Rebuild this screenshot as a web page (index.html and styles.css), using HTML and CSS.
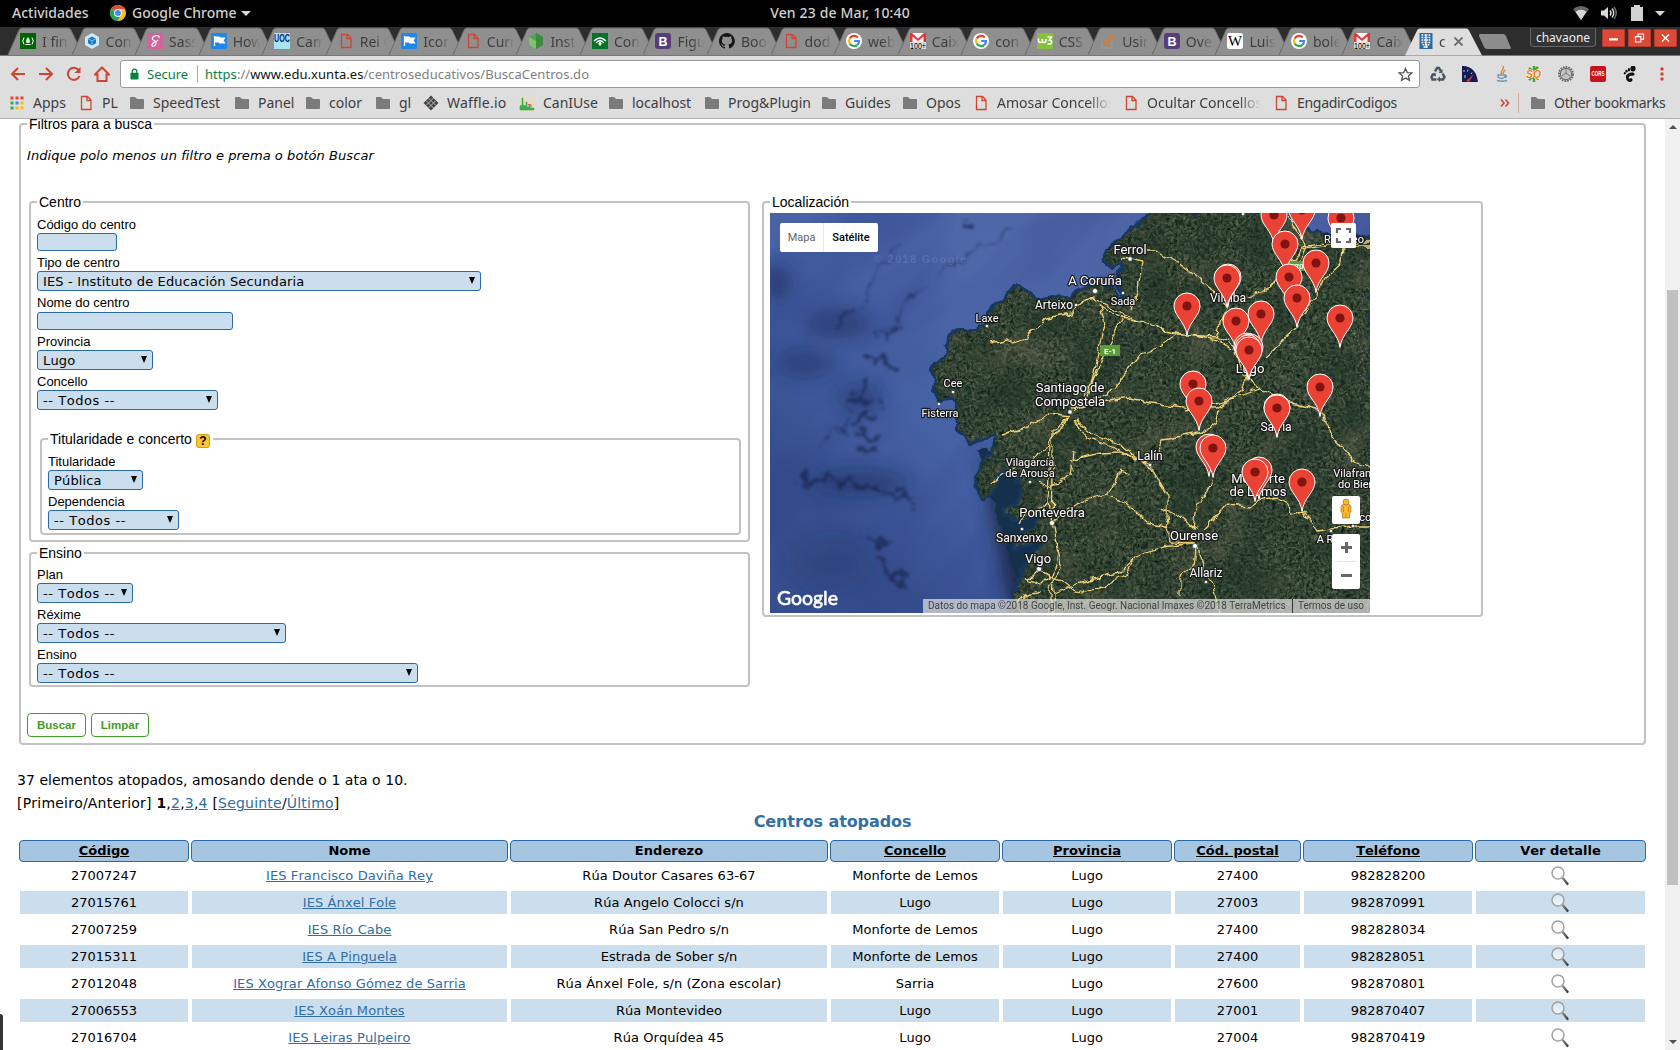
FILE: index.html
```html
<!DOCTYPE html>
<html lang="gl">
<head>
<meta charset="utf-8">
<title>Centros educativos</title>
<link rel="stylesheet" href="styles.css">
</head>
<body>
<svg class="defs" width="0" height="0" aria-hidden="true">
  <symbol id="tab" viewBox="0 0 78 28"><path d="M1 28L12 3Q13 1 15 1H61Q63 1 64 3L76 28Z" fill="#8f8f8f"/><path d="M1 28L12 3Q13 1 15 1H61Q63 1 64 3L76 28" fill="none" stroke="#6c6c6c"/></symbol>
  <symbol id="tab-on" viewBox="0 0 78 28"><path d="M0 28L12 3Q13 1 15 1H61Q63 1 64 3L77 28Z" fill="#dedede"/></symbol>
  <symbol id="file" viewBox="0 0 16 16"><path d="M3.500 1.500h6l3.500 3.500v9.500h-9.500zM9 1.500v4h4" fill="none" stroke="#cc4633" stroke-width="1.300"/></symbol>
  <symbol id="folder" viewBox="0 0 16 16"><path d="M1 3q0-1 1-1h4l2 2h6q1 0 1 1v8q0 1-1 1H2q-1 0-1-1z" fill="#7b7b7b"/></symbol>
  <symbol id="google" viewBox="0 0 16 16"><circle cx="8" cy="8" r="8" fill="#fff"/><g fill="none" stroke-width="2.200"><path d="M11.800 4.400A5 5 0 0 0 3.700 5.600" stroke="#ea4335"/><path d="M3.700 5.600a5 5 0 0 0 0 4.800" stroke="#fbbc05"/><path d="M3.700 10.400a5 5 0 0 0 7.700 1.400" stroke="#34a853"/><path d="M11.400 11.800A5 5 0 0 0 13 8H8.200" stroke="#4285f4"/></g></symbol>
  <symbol id="flag" viewBox="0 0 16 16"><rect width="16" height="16" rx="1.500" fill="#2087ea"/><path d="M3.500 3v10M4 4h4l1 1h4.500l-1.500 2.500L13.500 10H9L8 9H4z" fill="#fff" stroke="#fff" stroke-width="1.200"/></symbol>
  <symbol id="fcc" viewBox="0 0 16 16"><rect width="16" height="16" fill="#006400"/><path d="M4 4.500q-2.500 3.500 0 7M12 4.500q2.500 3.500 0 7" fill="none" stroke="#fff"/><path d="M8 4q3 3.500 1.500 6h-3Q5 7.500 8 4z" fill="#d8ead8"/><path d="M5.500 11.500h5" stroke="#fff"/></symbol>
  <symbol id="webpack" viewBox="0 0 16 16"><path d="M8 0l7 4v8l-7 4-7-4V4z" fill="#cfe9f7"/><path d="M8 3.500l4 2.200v4.600l-4 2.200-4-2.200V5.700z" fill="#1c78c0"/><path d="M4 5.700l4 2.200 4-2.200M8 8v4.500" stroke="#8ed6fb" fill="none" stroke-width=".8"/></symbol>
  <symbol id="sass" viewBox="0 0 16 16"><rect width="16" height="16" fill="#cf649a"/><path d="M12 5c1-3-4-3-6-1s0 3 2 4 1 4-1 5-3-1-1-3 4-1 5-3" fill="none" stroke="#fff" stroke-width="1.200"/></symbol>
  <symbol id="node" viewBox="0 0 16 16"><path d="M8 0l7 4v8l-7 4-7-4V4z" fill="#55a04c"/><path d="M8 0l7 4v8l-7 4z" fill="#3d8b3d"/><path d="M1 4l7 4v8l-7-4z" fill="#7dc46c"/></symbol>
  <symbol id="signal" viewBox="0 0 16 16"><rect width="16" height="16" fill="#067427"/><path d="M2 8q6-6 12 0M4 10q4-4.500 8 0" fill="none" stroke="#fff" stroke-width="1.300"/><circle cx="8" cy="10.500" r="1.500" fill="#fff"/><path d="M8 10v3" stroke="#fff"/></symbol>
  <symbol id="github" viewBox="0 0 16 16"><path fill="#161616" d="M8 0C3.600 0 0 3.600 0 8c0 3.500 2.300 6.500 5.500 7.600.4.100.5-.2.500-.4v-1.400c-2.200.5-2.700-1-2.700-1-.4-.9-.9-1.200-.9-1.200-.7-.5.100-.5.100-.5.800.1 1.200.8 1.200.8.700 1.200 1.900.9 2.300.7.100-.5.300-.9.500-1.100-1.800-.2-3.600-.9-3.600-4 0-.9.300-1.600.8-2.100-.1-.2-.4-1 .1-2.100 0 0 .7-.2 2.200.8a7.600 7.600 0 0 1 4 0c1.500-1 2.200-.8 2.200-.8.400 1.100.2 1.900.1 2.100.5.600.8 1.300.8 2.100 0 3.100-1.900 3.700-3.700 3.900.300.300.600.800.600 1.500v2.200c0 .200.100.500.600.400A8 8 0 0 0 8 0z"/></symbol>
  <symbol id="w3" viewBox="0 0 16 16"><rect width="16" height="16" fill="#83c13f"/><path d="M1.500 5.500v2q0 2 2 2t1.800-2V6v1.500q0 2 1.800 2t1.900-2V6M10.500 4h4l-2.200 3q2.700.3 2.200 2.800-1.500 2.200-4 .7" fill="none" stroke="#fff" stroke-width="1.600"/></symbol>
  <symbol id="so" viewBox="0 0 16 16"><path d="M2 9v6h10V9" fill="none" stroke="#999" stroke-width="1.300"/><path d="M4 12.500h6M4.200 9.700l6 1.200M5.200 6.500l5.500 2.700M7.500 3.300l4.500 4M10.500 1l3 5" stroke="#e8771c" stroke-width="1.400"/></symbol>
  <symbol id="xunta" viewBox="0 0 16 16"><path d="M1.500 0h13v16h-13z" fill="#2c6a9f"/><path d="M8 1v14" stroke="#fff" stroke-width="1.200"/><path d="M3.500 2h2m1 0h3m1 0h2M3.500 4.500h2m1 0h3m1 0h2M3.500 7h9M3.500 9.500h2m1 0h3m1 0h2M4.500 11.700h7M5.500 14h5" stroke="#fff" stroke-width="1.500" stroke-dasharray="1.800 .7"/></symbol>
  <linearGradient id="lens" x2="0" y2="1"><stop offset="0" stop-color="#fff" stop-opacity=".2"/><stop offset="1" stop-color="#fff" stop-opacity=".75"/></linearGradient>
  <linearGradient id="handle" x2="1"><stop offset="0" stop-color="#999"/><stop offset="1" stop-color="#333"/></linearGradient>
  <symbol id="mag" viewBox="0 0 20 20"><circle cx="8" cy="7" r="6" fill="url(#lens)" stroke="#a2a2a2" stroke-width="1.500"/><path d="M11.500 12.500l2-1.300 5 6q.5 2-1.500 2z" fill="url(#handle)"/></symbol>
</svg>

<header class="topbar">
  <span class="act">Actividades</span>
  <svg class="chrome" viewBox="0 0 16 16"><circle cx="8" cy="8" r="8" fill="#fbc116"/><path d="M8 8L1.100 4A8 8 0 0 1 14.900 4H8z" fill="#dd4b3e"/><path d="M1.100 4a8 8 0 0 0 6.400 12l3.600-6L8 8z" fill="#1da462"/><circle cx="8" cy="8" r="4" fill="#fff"/><circle cx="8" cy="8" r="3" fill="#4c8bf5"/></svg>
  <span class="app">Google Chrome</span><i class="caret"></i>
  <span class="clock">Ven 23 de Mar, 10:40</span>
  <div class="status">
    <svg width="16" height="14" viewBox="0 0 16 14"><path d="M0 3q8-6 16 0L8 14z" fill="#666"/><path d="M2.500 5.800q5.500-4 11 0L8 14z" fill="#d8d8d8"/></svg>
    <svg width="17" height="14" viewBox="0 0 17 14"><path d="M0 4.500h3L7 1v12L3 9.500H0z" fill="#d8d8d8"/><path d="M9 4.500q2 2.500 0 5M11 2.500q3.500 4.500 0 9" stroke="#d8d8d8" stroke-width="1.500" fill="none"/><path d="M13 1q4.500 6 0 12" stroke="#777" stroke-width="1.300" fill="none"/></svg>
    <svg width="12" height="16" viewBox="0 0 12 16"><path d="M0 2h3V0h6v2h3v14H0z" fill="#d2d2d2"/></svg>
    <i class="caret"></i>
  </div>
</header>

<nav class="tabs">
  <div class="tab"><svg class="shape"><use href="#tab"/></svg><svg class="ico"><use href="#fcc"/></svg><span>I fin</span></div>
  <div class="tab"><svg class="shape"><use href="#tab"/></svg><svg class="ico"><use href="#webpack"/></svg><span>Con</span></div>
  <div class="tab"><svg class="shape"><use href="#tab"/></svg><svg class="ico"><use href="#sass"/></svg><span>Sass</span></div>
  <div class="tab"><svg class="shape"><use href="#tab"/></svg><svg class="ico"><use href="#flag"/></svg><span>How</span></div>
  <div class="tab"><svg class="shape"><use href="#tab"/></svg><svg class="ico" viewBox="0 0 16 16"><rect width="16" height="16" fill="#a5e5f2"/><text x="0" y="9" class="glyph" font-size="10" font-weight="bold" fill="#0a1a78" textLength="16" lengthAdjust="spacingAndGlyphs">UOC</text></svg><span>Cam</span></div>
  <div class="tab"><svg class="shape"><use href="#tab"/></svg><svg class="ico"><use href="#file"/></svg><span>Rei C</span></div>
  <div class="tab"><svg class="shape"><use href="#tab"/></svg><svg class="ico"><use href="#flag"/></svg><span>Icor</span></div>
  <div class="tab"><svg class="shape"><use href="#tab"/></svg><svg class="ico"><use href="#file"/></svg><span>Curr</span></div>
  <div class="tab"><svg class="shape"><use href="#tab"/></svg><svg class="ico"><use href="#node"/></svg><span>Inst</span></div>
  <div class="tab"><svg class="shape"><use href="#tab"/></svg><svg class="ico"><use href="#signal"/></svg><span>Con</span></div>
  <div class="tab"><svg class="shape"><use href="#tab"/></svg><svg class="ico" viewBox="0 0 16 16"><rect width="16" height="16" rx="3" fill="#563d7c"/><text x="8" y="12.500" text-anchor="middle" class="glyph" font-size="12.500" font-weight="bold" fill="#fff">B</text></svg><span>Figu</span></div>
  <div class="tab"><svg class="shape"><use href="#tab"/></svg><svg class="ico"><use href="#github"/></svg><span>Boo</span></div>
  <div class="tab"><svg class="shape"><use href="#tab"/></svg><svg class="ico"><use href="#file"/></svg><span>dod</span></div>
  <div class="tab"><svg class="shape"><use href="#tab"/></svg><svg class="ico"><use href="#google"/></svg><span>web</span></div>
  <div class="tab"><svg class="shape"><use href="#tab"/></svg><svg class="ico" viewBox="0 0 16 16"><path d="M0 0h16v10H0z" fill="#f4f4f4"/><path d="M0 0h2l6 5.500L14 0h2v10h-2.500V3.500L8 8 2.500 3.500V10H0z" fill="#dd3b38"/><path d="M0 9h16v7H0z" fill="#ddd"/><text x="0" y="15.500" class="glyph" font-size="8.500" textLength="16" lengthAdjust="spacingAndGlyphs">100+</text></svg><span>Caix</span></div>
  <div class="tab"><svg class="shape"><use href="#tab"/></svg><svg class="ico"><use href="#google"/></svg><span>con</span></div>
  <div class="tab"><svg class="shape"><use href="#tab"/></svg><svg class="ico"><use href="#w3"/></svg><span>CSS</span></div>
  <div class="tab"><svg class="shape"><use href="#tab"/></svg><svg class="ico"><use href="#so"/></svg><span>Usir</span></div>
  <div class="tab"><svg class="shape"><use href="#tab"/></svg><svg class="ico" viewBox="0 0 16 16"><rect width="16" height="16" rx="3" fill="#563d7c"/><text x="8" y="12.500" text-anchor="middle" class="glyph" font-size="12.500" font-weight="bold" fill="#fff">B</text></svg><span>Ove</span></div>
  <div class="tab"><svg class="shape"><use href="#tab"/></svg><svg class="ico" viewBox="0 0 16 16"><rect width="16" height="16" rx="2.500" fill="#fff"/><text x="1" y="13" font-family="Liberation Serif,serif" font-size="14" textLength="14" lengthAdjust="spacingAndGlyphs">W</text></svg><span>Luis</span></div>
  <div class="tab"><svg class="shape"><use href="#tab"/></svg><svg class="ico"><use href="#google"/></svg><span>bole</span></div>
  <div class="tab"><svg class="shape"><use href="#tab"/></svg><svg class="ico" viewBox="0 0 16 16"><path d="M0 0h16v10H0z" fill="#f4f4f4"/><path d="M0 0h2l6 5.500L14 0h2v10h-2.500V3.500L8 8 2.500 3.500V10H0z" fill="#dd3b38"/><path d="M0 9h16v7H0z" fill="#ddd"/><text x="0" y="15.500" class="glyph" font-size="8.500" textLength="16" lengthAdjust="spacingAndGlyphs">100+</text></svg><span>Caix</span></div>
  <div class="tab active"><svg class="shape"><use href="#tab-on"/></svg><svg class="ico"><use href="#xunta"/></svg><span>c</span><svg class="close" viewBox="0 0 9 9"><path d="M.5.5l8 8m0-8l-8 8" stroke="#6b6b6b" stroke-width="1.900"/></svg></div>
  <svg class="newtab" viewBox="0 0 34 16"><path d="M2 0h23q2 0 3 2l5 12q0 1-2 1H9q-2 0-3-2L1 2q0-2 1-2z" fill="#8c8c8c"/></svg>
  <span class="user">chavaone</span>
  <div class="winbtns">
    <svg viewBox="0 0 22 18"><path d="M6 10.500h10" stroke="#fff" stroke-width="2.500"/></svg>
    <svg viewBox="0 0 22 18"><path d="M6.500 7.500h6v6h-6zM9.500 7V4.500h6v6H13" fill="none" stroke="#fff" stroke-width="1.300"/></svg>
    <svg viewBox="0 0 22 18"><path d="M7 5l8 8m0-8l-8 8" stroke="#fff" stroke-width="1.600"/></svg>
  </div>
</nav>

<div class="toolbar">
  <div class="nav">
    <svg viewBox="0 0 16 16"><path d="M15 8H2.500M8 2L2 8l6 6" /></svg>
    <svg viewBox="0 0 16 16"><path d="M1 8h12.500M8 2l6 6-6 6"/></svg>
    <svg viewBox="0 0 16 16"><path d="M13.500 10A6 6 0 1 1 12.500 4"/><path d="M14.500 1v6h-6z" fill="#cc4633" stroke="none"/></svg>
    <svg viewBox="0 0 16 16"><path d="M1 8.500l7-7 7 7h-2.500V15h-9V8.500z"/></svg>
  </div>
  <div class="omni">
    <svg class="lock" viewBox="0 0 10 13"><path d="M1 5h8q.5 0 .5.500V12q0 .5-.5.500H1q-.5 0-.5-.5V5.500Q.5 5 1 5z" fill="#0b8043"/><path d="M2.500 6V3.500a2.500 2.500 0 0 1 5 0V6" fill="none" stroke="#0b8043" stroke-width="1.400"/></svg>
    <span class="secure">Secure</span>
    <span class="url"><b>https</b>://<em>www.edu.xunta.es</em>/centroseducativos/BuscaCentros.do</span>
    <svg class="star" viewBox="0 0 16 16"><path d="M8 1.500l1.900 4.400 4.800.4-3.600 3.200 1.100 4.700L8 11.700l-4.200 2.500 1.100-4.700L1.300 6.300l4.800-.4z" fill="none" stroke="#555" stroke-width="1.400"/></svg>
  </div>
  <div class="exts">
    <svg viewBox="0 0 16 16"><g fill="none" stroke="#4b5563" stroke-width="2.500"><path d="M5 5.500L7 2h2l2 3.500M12.500 7.500l2 3.500-1.500 2.500h-4M6.500 13.500h-4L1.500 11l2-3.500"/></g><path d="M12.500 3v4h-4zM10 10.500v5.500L6.800 13.300zM1 8.500l4.500-2 .5 4z" fill="#4b5563"/></svg>
    <svg viewBox="0 0 16 16"><path d="M0 0h2q12 1 14 16H0z" fill="#141c55"/><path d="M2 4v2M6 3.500l-.5 2M10 6.500L9 8M3 9v3" stroke="#b9c4ff"/><path d="M4 15l8-7-5 8z" fill="#d33"/></svg>
    <svg viewBox="0 0 16 16"><path d="M8 8C5 5 11 4 9 0M9.500 8q-1-2 2-4" fill="none" stroke="#e88426" stroke-width="1.400"/><path d="M4 9h7v2q-3.500 3-7 0zM11 9.500q3 0 0 2.500M3 14.500q5 1.500 10 0" fill="none" stroke="#7795ad" stroke-width="1.400"/></svg>
    <svg viewBox="0 0 16 16"><path d="M3 2l3 3M12 1L9 4M3 14l3-3M13 14l-3-3M8 0v16" stroke="#4ba82e" stroke-width="2.500"/><text x="0" y="12" class="glyph" font-size="11" font-weight="bold" font-style="italic" fill="#f47b10" stroke="#fff" stroke-width="1.200" paint-order="stroke" textLength="15" lengthAdjust="spacingAndGlyphs">SQ</text></svg>
    <svg viewBox="0 0 16 16"><circle cx="8" cy="8" r="7" fill="none" stroke="#666" stroke-width="2" stroke-dasharray="1.700 1"/><circle cx="8" cy="8" r="5.700" fill="#c4c4c4" stroke="#666"/><path d="M8 3v4L4 10M8 7l4 3" stroke="#777" fill="none"/></svg>
    <svg viewBox="0 0 16 16"><rect width="16" height="16" rx="2" fill="#c8141a"/><text x="1.500" y="10" class="glyph" font-size="7" font-weight="bold" fill="#fff" textLength="13" lengthAdjust="spacingAndGlyphs">CORS</text></svg>
    <svg viewBox="0 0 16 16"><g fill="#111"><ellipse cx="11" cy="2.600" rx="2.600" ry="2.900"/><ellipse cx="7" cy="3.700" rx="1.200" ry="1.700"/><ellipse cx="4.500" cy="5.200" rx="1.100" ry="1.400"/><ellipse cx="2.800" cy="7.300" rx="1" ry="1.200"/><path d="M12.500 8.500c.5-3.500-8-2-8.500 2S7 17.500 9.800 15.300c2-2-.3-3.800-1.800-2.800-1 .8-2-1-.6-2.200 1.800-1.400 4.900.3 5.100-1.800z"/></g></svg>
    <svg viewBox="0 0 16 16"><g fill="#cc4633"><circle cx="8" cy="3" r="1.700"/><circle cx="8" cy="8" r="1.700"/><circle cx="8" cy="13" r="1.700"/></g></svg>
  </div>
</div>

<div class="bookmarks">
  <a><svg viewBox="0 0 16 16"><path d="M1.500 3h13" stroke="#ea4335" stroke-width="3" stroke-dasharray="3 2"/><path d="M1.500 8h3" stroke="#34a853" stroke-width="3"/><path d="M6.500 8h3" stroke="#4285f4" stroke-width="3"/><path d="M11.500 8h3" stroke="#fbbc05" stroke-width="3"/><path d="M1.500 13h3" stroke="#34a853" stroke-width="3"/><path d="M6.500 13h8" stroke="#fbbc05" stroke-width="3" stroke-dasharray="3 2"/></svg>Apps</a>
  <a><svg><use href="#file"/></svg>PL</a>
  <a><svg><use href="#folder"/></svg>SpeedTest</a>
  <a><svg><use href="#folder"/></svg>Panel</a>
  <a><svg><use href="#folder"/></svg>color</a>
  <a><svg><use href="#folder"/></svg>gl</a>
  <a class="wide"><svg viewBox="0 0 16 16"><path d="M8 .5L15.500 8 8 15.500.5 8z" fill="#444"/><path d="M5.500 3L13 10.500M3 5.500l7.500 7.500M10.500 3L3 10.500M13 5.500L5.500 13" stroke="#ccc" stroke-width=".8"/></svg>Waffle.io</a>
  <a><svg viewBox="0 0 16 16"><path d="M0 0h16v16H0z" fill="#e6dccb"/><path d="M1 15v-4l2-1V3h1v7l3 1V7h1v5h2v-2h1v3h4v2z" fill="#3fae49" stroke="#3fae49" stroke-width=".6"/><path d="M9 9.500h3v3" stroke="#d66" fill="none"/></svg>CanIUse</a>
  <a><svg><use href="#folder"/></svg>localhost</a>
  <a><svg><use href="#folder"/></svg>Prog&amp;Plugin</a>
  <a><svg><use href="#folder"/></svg>Guides</a>
  <a><svg><use href="#folder"/></svg>Opos</a>
  <a class="long"><svg><use href="#file"/></svg><span>Amosar Concellos</span></a>
  <a class="long"><svg><use href="#file"/></svg><span>Ocultar Concellos</span></a>
  <a class="tight"><svg><use href="#file"/></svg>EngadirCodigos</a>
  <svg class="more" viewBox="0 0 10 10"><path d="M1 1.500L4 5 1 8.500M5.500 1.500l3 3.500-3 3.500" fill="none" stroke="#cc4633" stroke-width="1.600"/></svg>
  <a class="other tight"><svg><use href="#folder"/></svg>Other bookmarks</a>
</div>

<div class="view">
<main>
  <fieldset class="filters">
    <legend>Filtros para a busca</legend>
    <p class="hint">Indique polo menos un filtro e prema o botón Buscar</p>
    <div class="cols">
      <div class="col">
        <fieldset class="centro">
          <legend>Centro</legend>
          <div class="field"><label>Código do centro</label><div class="input code"></div></div>
          <div class="field"><label>Tipo de centro</label><div class="select tipo">IES - Instituto de Educación Secundaria</div></div>
          <div class="field name"><label>Nome do centro</label><div class="input nome"></div></div>
          <div class="field"><label>Provincia</label><div class="select prov">Lugo</div></div>
          <div class="field"><label>Concello</label><div class="select all conc">-- Todos --</div></div>
          <fieldset class="titular">
            <legend>Titularidade e concerto <span class="help">?</span></legend>
            <div class="field"><label>Titularidade</label><div class="select titu">Pública</div></div>
            <div class="field"><label>Dependencia</label><div class="select all depe">-- Todos --</div></div>
          </fieldset>
        </fieldset>
        <fieldset class="ensino">
          <legend>Ensino</legend>
          <div class="field"><label>Plan</label><div class="select all plan">-- Todos --</div></div>
          <div class="field"><label>Réxime</label><div class="select all rexi">-- Todos --</div></div>
          <div class="field"><label>Ensino</label><div class="select all ensi">-- Todos --</div></div>
        </fieldset>
      </div>
      <fieldset class="local">
        <legend>Localización</legend>
        <div class="map">
          <svg class="canvas" width="600" height="400" viewBox="0 0 600 400">
            <defs>
              <linearGradient id="sea" x1="0" y1=".6" x2="1" y2="0"><stop offset="0" stop-color="#364e8d"/><stop offset=".22" stop-color="#4661a4"/><stop offset=".5" stop-color="#4f68a9"/><stop offset="1" stop-color="#4a5ea2"/></linearGradient>
              <filter id="blur" x="-50%" y="-50%" width="200%" height="200%"><feGaussianBlur stdDeviation="9"/></filter>
              <filter id="blur2" x="-50%" y="-50%" width="200%" height="200%" color-interpolation-filters="sRGB"><feTurbulence type="fractalNoise" baseFrequency=".06" numOctaves="3" seed="4"/><feDisplacementMap in="SourceGraphic" scale="30" xChannelSelector="R" yChannelSelector="G"/><feGaussianBlur stdDeviation="1.500"/></filter>
              <filter id="ground" x="0" y="0" width="100%" height="100%" color-interpolation-filters="sRGB"><feTurbulence type="fractalNoise" baseFrequency=".32" numOctaves="4" seed="8"/><feColorMatrix values=".5 .1 0 0 -.095  .45 .15 0 0 -.035  .38 .1 .05 0 -.065  0 0 0 0 1"/></filter>
              <filter id="shade" x="0" y="0" width="100%" height="100%" color-interpolation-filters="sRGB"><feTurbulence type="fractalNoise" baseFrequency=".02" numOctaves="4" seed="21"/><feColorMatrix values="0 0 0 0 .11  0 0 0 0 .2  0 0 0 0 .15  3 0 0 0 -1.250"/></filter>
              <filter id="bare" x="0" y="0" width="100%" height="100%" color-interpolation-filters="sRGB"><feTurbulence type="fractalNoise" baseFrequency=".025" numOctaves="5" seed="40"/><feColorMatrix values="0 0 0 0 .42  0 0 0 0 .41  0 0 0 0 .33  3.500 0 0 0 -1.900"/></filter>
              <filter id="swell" x="0" y="0" width="100%" height="100%" color-interpolation-filters="sRGB"><feTurbulence type="fractalNoise" baseFrequency=".007 .022" numOctaves="4" seed="5"/><feColorMatrix values="0 0 0 0 .18  0 0 0 0 .26  0 0 0 0 .53  2.200 0 0 0 -.95"/></filter>
              <filter id="wiggle" x="-5%" y="-5%" width="110%" height="110%" color-interpolation-filters="sRGB"><feTurbulence type="fractalNoise" baseFrequency=".09" numOctaves="2" seed="3"/><feDisplacementMap in="SourceGraphic" scale="9" xChannelSelector="R" yChannelSelector="G"/></filter>
              <path id="coast" d="M384 0L371 10 358 19 350 27 337 37 335 49 343 53 352 48 355 56 348 64 351 74 358 86 350 88 342 72 336 78 329 72 320 74 307 80 300 87 283 84 267 87 257 80 247 73 237 87 223 94 217 110 207 119 190 119 180 124 178 137 172 147 163 155 167 167 165 180 172 188 178 182 184 186 187 197 190 217 200 230 208 224 228 220 224 238 214 250 206 268 212 284 221 280 226 262 234 254 244 262 254 272 250 290 233 296 243 306 255 306 276 298 262 318 244 324 246 336 272 322 278 326 262 345 252 360 246 374 242 400H600V25L570 24 555 23 540 20 525 8 505 0Z"/>
              <clipPath id="land"><use href="#coast"/></clipPath>
              <g id="pin" transform="translate(15 15)"><path d="M0 29.500C-1.500 16-13 10-13 0a13 13 0 0 1 26 0C13 10 1.500 16 0 29.500z" fill="#ea4335" stroke="#fff"/><circle r="4.600" fill="#811411"/></g>
            </defs>
            <rect width="600" height="400" fill="url(#sea)"/>
            <g filter="url(#blur)" fill="#1c2c5e"><ellipse cx="68" cy="110" rx="34" ry="16" opacity=".6"/><ellipse cx="35" cy="150" rx="30" ry="14" opacity=".5"/><ellipse cx="8" cy="70" rx="14" ry="18" opacity=".7"/><ellipse cx="90" cy="185" rx="22" ry="14" opacity=".5"/><ellipse cx="90" cy="270" rx="50" ry="13" opacity=".5"/><ellipse cx="60" cy="350" rx="40" ry="25" opacity=".25"/></g>
            <g filter="url(#swell)" opacity=".5" transform="rotate(-48 150 200) translate(-150 -200) scale(2)"><rect width="600" height="400"/></g>
            <g filter="url(#blur2)" stroke="#19264f" fill="none" stroke-width="5" opacity=".7"><path d="M82 95L68 116M100 145l25 8M118 125l14-12M95 165l-12 22 25 2M80 210l30-10M85 222l28 2M90 240h22M30 267l60 4 40 10 10 8M100 325l20 8M110 345l10 15 18 6M130 370l12 4M200 14l-6-4"/><path d="M110 125L150 75M80 200L45 240M90 90L130 30M170 60L240 15" stroke-width="1.500"/></g>
            <path d="M212 240Q222 310 240 400H275V270Z" fill="#12213c" filter="url(#blur)" opacity=".8"/>
            <path d="M208 236L262 236 292 300 285 345 248 380 236 330Z" fill="#14304a" filter="url(#wiggle)"/>
            <g filter="url(#wiggle)"><use href="#coast" fill="#14384f" stroke="#17375c" stroke-width="6" stroke-linejoin="round"/></g>
            <g filter="url(#wiggle)"><g clip-path="url(#land)"><rect width="600" height="400" fill="#2c3e30"/><rect width="600" height="400" filter="url(#ground)"/><rect width="600" height="400" filter="url(#bare)" opacity=".4"/><rect width="600" height="400" filter="url(#shade)" opacity=".5"/></g></g>
            <g class="roads" filter="url(#wiggle)">
              <path d="M220 130L235 127 243 130 255 126 262 118 272 114 275 106 290 102 303 100 310 90 325 86 330 89 353 102 383 112 407 122 417 122 447 124 463 132 467 144 478 164M328 92L350 105 374 108 395 118 447 127 462 136M370 37H383L407 49 427 64 440 74 457 94 447 124M350 45L360 46 372 49 368 77 362 97M330 94L335 111 328 144 320 174 303 199M355 102L337 134 323 167 315 190M303 196L337 182 353 162 372 140 390 134 407 122M300 195L337 188 360 185 380 190 413 194 447 195 473 177 478 164M415 197L450 190 490 176M478 164L490 176 510 186 550 197 563 224 583 247 600 254M495 144L527 114 547 80 555 65 572 50 573 34M473 85L500 75 517 54 533 34 555 30 600 30M533 36L556 33 600 33M517 3L530 20 537 34 515 80M300 202L283 220V264L282 310 288 340 283 364 285 400M298 206L280 230 278 290 284 320 292 355 280 375V400M232 222L257 215 280 200 300 203M220 270L237 257 262 250 268 238 280 234M303 207L317 224 343 234 367 247 380 252 397 280V304L400 329 423 330M305 207L325 222 350 232 385 260 395 280M300 247L330 240 350 239 367 247M358 260L350 257 345 270 337 282M282 310L310 290 337 282 357 290 377 310 400 315M390 294L410 304 427 317M423 330L393 334 367 342 357 360 333 374 313 379 300 374 269 356M366 344L350 360 327 365 307 370 285 380M269 358L262 365 255 366 272 372 284 360M245 390L255 382 270 378M423 317L425 300 443 267M388 240L393 227 433 219 447 209 450 197M435 317L455 292 480 294 487 287 507 284 518 290 520 302 533 299 547 319 583 314 600 314M425 334L423 354 410 364V384M427 334L430 344 443 374 450 400M268 269L280 273 300 262 303 240M250 312L256 300 278 290"/>
            </g>
            <g fill="none" stroke="#b9bdb6" stroke-width=".7" stroke-dasharray="1.500 2.500" opacity=".7"><path d="M560 70l-8 15 12 15 20 20 10 22-8 15 14 18v20M600 215l-22 18-8 25 22 30v20M350 393l8-10 8-2v19"/></g>
            <rect x="330" y="132" width="20" height="11" fill="#5c9c3c"/><text x="340" y="140.500" class="road-no">E-1</text>
            <rect x="519" y="48" width="17" height="10" fill="#5c9c3c"/><text x="529" y="56" class="road-no">70</text>
            <g fill="#fff" stroke="#444" stroke-width=".6"><circle cx="217" cy="113" r="1.600"/><circle cx="183" cy="179" r="1.600"/><circle cx="169" cy="191" r="1.600"/><circle cx="360" cy="46" r="2.200"/><circle cx="325" cy="78" r="2.500"/><circle cx="353" cy="80" r="1.600"/><circle cx="306" cy="92" r="1.600"/><circle cx="282" cy="310" r="2.500"/><circle cx="252" cy="316" r="1.600"/><circle cx="269" cy="356" r="2.500"/><circle cx="380" cy="252" r="1.800"/><circle cx="425" cy="333" r="2.500"/><circle cx="436" cy="369" r="1.600"/><circle cx="260" cy="269" r="1.600"/><circle cx="300" cy="199" r="2.200"/><circle cx="561" cy="318" r="1.600"/><circle cx="583" cy="313" r="1.600"/><circle cx="473" cy="1" r="1.600"/></g>
            <g class="places">
              <text x="360" y="41" class="l">Ferrol</text><text x="325" y="72" class="l">A Coruña</text><text x="353" y="92">Sada</text><text x="284" y="96" class="m">Arteixo</text><text x="217" y="109">Laxe</text><text x="183" y="174">Cee</text><text x="170" y="204">Fisterra</text><text x="458" y="89" class="m">Vilalba</text><text x="574" y="30">Ribadeo</text><text x="480" y="160" class="l">Lugo</text><text x="300" y="179" class="l">Santiago de</text><text x="300" y="193" class="l">Compostela</text><text x="260" y="253">Vilagarcía</text><text x="260" y="264">de Arousa</text><text x="282" y="304" class="l">Pontevedra</text><text x="252" y="329" class="m">Sanxenxo</text><text x="268" y="350" class="l">Vigo</text><text x="380" y="247" class="m">Lalín</text><text x="506" y="218" class="m">Sarria</text><text x="488" y="270" class="l">Monforte</text><text x="488" y="282.500" class="l">de Lemos</text><text x="588" y="264">Vilafranca</text><text x="591" y="275">do Bierzo</text><text x="582" y="308">O Barco</text><text x="561" y="330">A Rúa</text><text x="424" y="327" class="l">Ourense</text><text x="436" y="364" class="m">Allariz</text>
            </g>
            <text x="104" y="50" class="mark">© 2018 Google</text>
            <g>
              <use href="#pin" x="517" y="-18"/><use href="#pin" x="489" y="-13"/><use href="#pin" x="556" y="-10"/><use href="#pin" x="500" y="16"/><use href="#pin" x="531" y="35"/><use href="#pin" x="504" y="49"/><use href="#pin" x="443" y="49"/><use href="#pin" x="442" y="50"/><use href="#pin" x="512" y="70"/><use href="#pin" x="402" y="78"/><use href="#pin" x="476" y="86"/><use href="#pin" x="555" y="90"/><use href="#pin" x="451" y="93"/><use href="#pin" x="462" y="118"/><use href="#pin" x="465" y="119"/><use href="#pin" x="463" y="120"/><use href="#pin" x="464" y="122"/><use href="#pin" x="408" y="156"/><use href="#pin" x="535" y="159"/><use href="#pin" x="414" y="173"/><use href="#pin" x="492" y="179"/><use href="#pin" x="492" y="180"/><use href="#pin" x="424" y="219"/><use href="#pin" x="428" y="220"/><use href="#pin" x="474" y="242"/><use href="#pin" x="470" y="244"/><use href="#pin" x="517" y="254"/>
            </g>
            <text x="7" y="392" class="logo" textLength="61" lengthAdjust="spacingAndGlyphs">Google</text>
          </svg>
          <div class="types"><span>Mapa</span><b>Satélite</b></div>
          <svg class="full" viewBox="0 0 25 25"><path d="M6 10V6h4M15 6h4v4M19 15v4h-4M10 19H6v-4" fill="none" stroke="#666" stroke-width="2.200"/></svg>
          <svg class="peg" viewBox="0 0 28 28"><g fill="#f9b72b" stroke="#99631d" stroke-width=".6"><path d="M9 11q0-2.500 2.500-2.500h5Q19 8.500 19 11v5l-1.500 1v5h-7v-5L9 16z"/><circle cx="14" cy="6" r="3"/></g><path d="M11.500 10v6M16.500 10v6M14 17v5" stroke="#c77e1c" stroke-width=".8"/></svg>
          <div class="zoom"><i class="plus"></i><i class="minus"></i></div>
          <div class="credits"><span>Datos do mapa ©2018 Google, Inst. Geogr. Nacional Imaxes ©2018 TerraMetrics</span><span>Termos de uso</span></div>
        </div>
      </fieldset>
    </div>
    <div class="buttons"><button>Buscar</button><button>Limpar</button></div>
  </fieldset>

  <p class="count">37 elementos atopados, amosando dende o 1 ata o 10.</p>
  <p class="pager">[Primeiro/Anterior] <b>1</b>,<a>2</a>,<a>3</a>,<a>4</a> [<a>Seguinte</a>/<a>Último</a>]</p>
  <h2>Centros atopados</h2>
  <div class="grid">
    <div class="row head"><span><u>Código</u></span><span>Nome</span><span>Enderezo</span><span><u>Concello</u></span><span><u>Provincia</u></span><span><u>Cód. postal</u></span><span><u>Teléfono</u></span><span>Ver detalle</span></div>
    <div class="row"><span>27007247</span><span><a>IES Francisco Daviña Rey</a></span><span>Rúa Doutor Casares 63-67</span><span>Monforte de Lemos</span><span>Lugo</span><span>27400</span><span>982828200</span><span><svg><use href="#mag"/></svg></span></div>
    <div class="row odd"><span>27015761</span><span><a>IES Ánxel Fole</a></span><span>Rúa Angelo Colocci s/n</span><span>Lugo</span><span>Lugo</span><span>27003</span><span>982870991</span><span><svg><use href="#mag"/></svg></span></div>
    <div class="row"><span>27007259</span><span><a>IES Río Cabe</a></span><span>Rúa San Pedro s/n</span><span>Monforte de Lemos</span><span>Lugo</span><span>27400</span><span>982828034</span><span><svg><use href="#mag"/></svg></span></div>
    <div class="row odd"><span>27015311</span><span><a>IES A Pinguela</a></span><span>Estrada de Sober s/n</span><span>Monforte de Lemos</span><span>Lugo</span><span>27400</span><span>982828051</span><span><svg><use href="#mag"/></svg></span></div>
    <div class="row"><span>27012048</span><span><a>IES Xograr Afonso Gómez de Sarria</a></span><span>Rúa Ánxel Fole, s/n (Zona escolar)</span><span>Sarria</span><span>Lugo</span><span>27600</span><span>982870801</span><span><svg><use href="#mag"/></svg></span></div>
    <div class="row odd"><span>27006553</span><span><a>IES Xoán Montes</a></span><span>Rúa Montevideo</span><span>Lugo</span><span>Lugo</span><span>27001</span><span>982870407</span><span><svg><use href="#mag"/></svg></span></div>
    <div class="row"><span>27016704</span><span><a>IES Leiras Pulpeiro</a></span><span>Rúa Orquídea 45</span><span>Lugo</span><span>Lugo</span><span>27004</span><span>982870419</span><span><svg><use href="#mag"/></svg></span></div>
  </div>
</main>
<div class="scroll"><i class="up"></i><div class="thumb"></div><i class="down"></i></div>
</div>
<div class="dock"></div>
</body>
</html>
```

FILE: styles.css
```css
* { box-sizing: border-box; }
body { margin: 0; width: 1680px; height: 1050px; overflow: hidden; background: #fff; color: #000; display: flex; flex-direction: column; position: relative; font: 13px/16px "DejaVu Sans", sans-serif; font-kerning: none; }
p, h2 { margin: 0; }
svg { display: block; flex: none; }
.defs { position: absolute; }
.glyph { font-family: "Liberation Sans", sans-serif; }

/* desktop bar */
.topbar { height: 27px; flex: none; background: #000; color: #cfcfcf; display: flex; align-items: center; padding: 0 15px 1px 12px; position: relative; font: 500 14px/20px "Noto Sans", sans-serif; }
.act { width: 98px; }
.chrome { width: 16px; height: 16px; margin-right: 6px; }
.app { width: 109px; }
.caret { width: 0; height: 0; border: 5px solid transparent; border-top-color: #d8d8d8; border-bottom: 0; }
.clock { position: absolute; left: 0; right: 0; text-align: center; letter-spacing: .15px; }
.status { margin-left: auto; display: flex; align-items: center; gap: 12px; }
.status svg:nth-child(3) { margin-left: 1px; }

/* tabs */
.tabs { height: 29px; flex: none; background: #2d2d2d; border-bottom: 1px solid #777; display: flex; padding-left: 7px; position: relative; font: 14px/20px "Noto Sans", sans-serif; color: #3f3f3f; }
.tab { width: 63.550px; flex: none; position: relative; height: 28px; padding: 5px 0 0 13px; display: flex; }
.shape { position: absolute; left: 0; top: 0; width: 78px; height: 28px; }
.tab .ico { width: 16px; height: 16px; position: relative; margin-top: 1px; }
.tab span { margin: 0 0 0 6px; width: 27px; overflow: hidden; white-space: nowrap; position: relative; height: 22px; -webkit-mask-image: linear-gradient(90deg, #000 55%, transparent); mask-image: linear-gradient(90deg, #000 55%, transparent); }
.tab.active { width: 73px; height: 29px; z-index: 2; }
.tab.active .shape { height: 29px; }
.tab.active span { width: 8px; margin-left: 5px; }
.close { width: 9px; height: 9px; position: relative; margin: 5px 0 0 7px; }
.newtab { width: 34px; height: 16px; margin: 7px 0 0 0; }
.user { margin: 1px 6px 0 auto; width: 66px; height: 19px; border: 1px solid #666; border-top-color: #444; border-radius: 0 0 4px 4px; background: #333; color: #f0f0f0; text-align: center; font: 12px/18px "Noto Sans", sans-serif; }
.winbtns { display: flex; gap: 3px; padding: 2px 3px 0 0; }
.winbtns svg { width: 23px; height: 18px; background: #dc4936; border: 1px solid #b5382a; border-radius: 1px; }

/* toolbar */
.toolbar { height: 33px; flex: none; background: #dedede; display: flex; align-items: center; padding: 3px 10px 0; }
.nav { display: flex; gap: 12px; width: 110px; }
.nav svg { width: 16px; height: 16px; fill: none; stroke: #cc4633; stroke-width: 2; }
.omni { width: 1300px; height: 28px; background: #fff; border: 1px solid #9a9a9a; border-radius: 3px; display: flex; align-items: center; padding: 0 6px 0 9px; font: 13px/18px "Noto Sans", sans-serif; }
.lock { width: 9px; height: 12px; }
.secure { margin-left: 8px; width: 51px; color: #0b8043; border-right: 1px solid #aaa; }
.url { margin-left: 7px; color: #808080; letter-spacing: .05px; }
.url b { font-weight: 400; color: #0b8043; }
.url em { font-style: normal; color: #111; }
.star { width: 15px; height: 15px; margin-left: auto; }
.exts { display: flex; gap: 16px; margin-left: 10px; }
.exts svg { width: 16px; height: 16px; }

/* bookmarks */
.bookmarks { height: 30px; flex: none; background: #dedede; border-bottom: 1px solid #b2b2b2; display: grid; grid-template-columns: 69px 51px 105px 71px 70px 48px 96px 89px 96px 117px 81px 71px 150px 150px 227px 18px 1fr; align-items: center; padding: 0 0 2px 9px; font: 14px/20px "Noto Sans", sans-serif; color: #3d3d3d; white-space: nowrap; }
.bookmarks a { display: flex; align-items: center; gap: 8px; }
.bookmarks a svg { width: 16px; height: 16px; }
.bookmarks .tight { letter-spacing: -.3px; }
.bookmarks .wide { letter-spacing: .2px; }
.long span { width: 114px; overflow: hidden; -webkit-mask-image: linear-gradient(90deg, #000 80%, transparent); mask-image: linear-gradient(90deg, #000 80%, transparent); }
.more { width: 10px; height: 10px; }
.bookmarks .other { border-left: 1px solid #d9a8a2; padding-left: 11px; }

/* page */
.view { flex: 1; min-height: 0; display: flex; overflow: hidden; }
main { width: 1665px; flex: none; padding: 0 19px; margin-top: -3px; }
.scroll { width: 15px; background: #f1f1f1; display: flex; flex-direction: column; align-items: center; }
.up, .down { width: 0; height: 0; border: 4px solid transparent; }
.up { border-bottom-color: #505050; border-top: 0; margin-top: 6px; }
.thumb { width: 11px; height: 595px; margin-top: 161px; background: #c1c1c1; }
.down { border-top-color: #505050; border-bottom: 0; margin-top: auto; margin-bottom: 6px; }

fieldset { margin: 0; min-width: 0; border: 2px solid #c2c2c2; border-radius: 4px; padding: 0 6px; }
legend { padding: 0 2px; font: 14px/16px "Liberation Sans", Arial, sans-serif; height: 16px; white-space: nowrap; }
.filters { width: 1627px; padding-bottom: 6px; }
.hint { font-style: italic; margin-top: 16px; letter-spacing: .06px; }
.cols { display: flex; align-items: flex-start; gap: 12px; margin: 30px 0 0 2px; }
.col { width: 721px; }
.centro { padding-top: 7px; padding-bottom: 5px; }
.titular { margin: 21px 0 0 3px; width: 701px; padding-top: 7px; padding-bottom: 3px; }
.ensino { margin-top: 3px; padding-top: 6px; padding-bottom: 2px; }
.local { width: 721px; padding-top: 3px; padding-bottom: 2px; }
.field + .field { margin-top: 4px; }
label { display: block; height: 16px; font: 13px/16px "Liberation Sans", Arial, sans-serif; }
.name label { height: 17px; }
.input, .select { background: #cbdeee; border: 1px solid #2b69a3; border-radius: 3px; }
.input { height: 18px; }
.select { height: 20px; padding: 1px 6px 0 5px; line-height: 18px; display: flex; justify-content: space-between; align-items: center; white-space: nowrap; letter-spacing: .15px; }
.select.all { letter-spacing: .55px; }
.select::after { content: ""; border: 3.500px solid transparent; border-top: 7px solid #000; border-bottom: 0; margin: -2px -1px 0 0; }
.code { width: 80px; }
.tipo { width: 444px; }
.nome { width: 196px; }
.prov { width: 116px; }
.conc { width: 181px; }
.titu { width: 95px; }
.depe { width: 131px; }
.plan { width: 96px; }
.rexi { width: 249px; }
.ensi { width: 381px; }
.help { display: inline-block; width: 14px; height: 14px; border: 1px solid #d39b12; border-radius: 3px; background: #fdc62f; font: bold 12px/12px "Liberation Sans", sans-serif; text-align: center; margin: 0 1px 0 0; vertical-align: -2px; position: relative; top: -1px; }
.buttons { display: flex; gap: 5px; margin-top: 26px; }
button { height: 24px; padding: 0 8px; border: 1px solid #439c26; border-radius: 4px; background: #fff; color: #439c26; font: bold 11.500px/20px "Liberation Sans", Arial, sans-serif; }
button:first-child { width: 59px; }
button:last-child { width: 58px; }

/* map */
.map { width: 600px; height: 400px; position: relative; overflow: hidden; }
.roads path { fill: none; stroke: #efd079; stroke-width: 1.300; stroke-linejoin: round; }
.places text { font: 11px Roboto, sans-serif; fill: #fff; stroke: #1b1b1b; stroke-width: 2.500px; paint-order: stroke; stroke-linejoin: round; text-anchor: middle; }
.places .l { font-size: 13px; }
.places .m { font-size: 12px; }
.road-no { font: bold 8px Roboto, sans-serif; fill: #fff; text-anchor: middle; }
.mark { font: bold 11px "Liberation Sans", sans-serif; fill: #8b9bd0; opacity: .25; letter-spacing: 1.300px; }
.logo { font: 500 20px Lato, sans-serif; fill: #fff; stroke: #fff; stroke-width: .5px; }
.types { position: absolute; left: 10px; top: 10px; width: 98px; height: 29px; background: #fff; border-radius: 2px; display: flex; font: 11px/29px Roboto, sans-serif; text-align: center; color: #666; }
.types span { width: 44px; border-right: 1px solid #e8e8e8; }
.types b { flex: 1; font-weight: 500; color: #000; }
.full { position: absolute; left: 561px; top: 10px; width: 25px; height: 25px; background: #fff; border-radius: 2px; }
.peg { position: absolute; left: 562px; top: 283px; width: 28px; height: 28px; background: #fff; border-radius: 2px; }
.zoom { position: absolute; left: 562px; top: 321px; width: 28px; height: 55px; background: linear-gradient(#e4e4e4, #e4e4e4) center / 19px 1px no-repeat #fff; border-radius: 2px; }
.plus, .minus { position: absolute; left: 9px; width: 11px; height: 11px; background: linear-gradient(#666, #666) center / 11px 3px no-repeat; }
.plus { top: 8px; background: linear-gradient(#666, #666) center / 11px 3px no-repeat, linear-gradient(#666, #666) center / 3px 11px no-repeat; }
.minus { top: 36px; }
.credits { position: absolute; right: 0; bottom: 0; width: 447px; height: 14px; background: rgba(225, 225, 222, .72); color: #444; font: 10px/13px Roboto, sans-serif; display: flex; justify-content: space-between; padding: 0 6px 0 5px; white-space: nowrap; }
.credits span + span { border-left: 1px solid #333; padding-left: 5px; }

/* results */
.count, .pager { font-size: 14px; line-height: 22px; margin-left: -2px; }
.count { margin-top: 24px; letter-spacing: .04px; }
.pager { margin-top: 1px; letter-spacing: .21px; }
.grid a, .pager a { color: #2f6ea5; text-decoration: underline; }
.grid a { letter-spacing: .1px; }
h2 { font: bold 16px/20px "DejaVu Sans", sans-serif; color: #336fa5; text-align: center; margin-top: -2px; letter-spacing: -.1px; }
.grid { margin: 8px 1px 0; display: flex; flex-direction: column; gap: 4px; }
.row { display: grid; grid-template-columns: 168px 315px 316px 168px 168px 125px 168px 169px; column-gap: 4px; text-align: center; line-height: 23px; height: 23px; }
.row span:nth-child(3) { letter-spacing: .06px; }
.row svg { width: 20px; height: 20px; margin: 2px auto -2px; position: relative; left: -1px; }
.row.odd span { background: #cbdeee; }
.row.head { height: 21px; margin-bottom: -1px; font-weight: bold; line-height: 20px; }
.head span { margin: 0 -1px; background: #a6c5e1; border: 1px solid #2b69a3; border-radius: 4px; }
.dock { position: absolute; left: 0; bottom: 0; width: 3px; height: 36px; background: #333; border-radius: 0 3px 0 0; }
```
